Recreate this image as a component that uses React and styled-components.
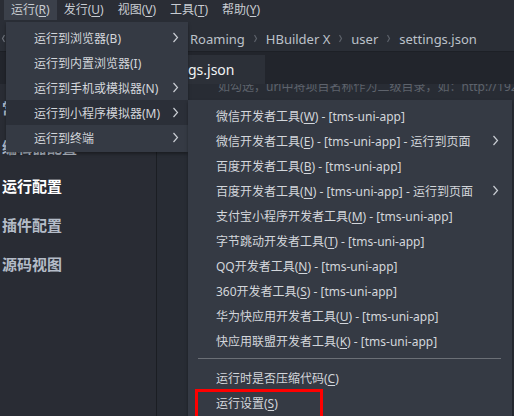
import React from "react";
import styled, { createGlobalStyle } from "styled-components";

const GlobalStyle = createGlobalStyle`
  html, body { margin: 0; padding: 0; background: #282c34; }
  body { font-family: "Noto Sans", "Noto Sans CJK SC", sans-serif; }
`;

const Page = styled.div`
  position: relative;
  width: 514px;
  height: 416px;
  overflow: hidden;
  background: #282c34;
  display: flex;
  flex-direction: column;
`;

const MenuBar = styled.div`
  display: flex;
  height: 20px;
  padding-left: 4px;
  background: #2a2d35;
`;

const MenuTitle = styled.div`
  padding: 0 7px;
  line-height: 20px;
  font-size: 12px;
  color: #c8ccd2;
  background: ${(p) => (p.$open ? "#3b404a" : "transparent")};
`;

const Key = styled.span`
  text-decoration: underline;
  text-underline-offset: 2px;
`;

const Breadcrumb = styled.div`
  display: flex;
  align-items: center;
  height: 32px;
  padding-top: 6px;
  box-sizing: border-box;
  border-bottom: 1px solid #1d2026;
  background: #2a2e36;
`;

const ScrollArrow = styled.div`
  width: 8px;
  display: flex;
  align-items: center;
  padding-left: 1px;
`;

const CrumbTrail = styled.div`
  display: flex;
  align-items: center;
  margin-left: 181px;
  font-size: 13px;
  color: #bcc1c9;
  white-space: nowrap;
`;

const CrumbSep = styled.span`
  display: flex;
  align-items: center;
  padding: 0 8px;
`;

const TabBar = styled.div`
  display: flex;
  align-items: flex-end;
  height: 32px;
  background: #22252c;
`;

const Tab = styled.div`
  margin-left: 139px;
  height: 29px;
  padding: 0 31px 0 12px;
  display: flex;
  align-items: center;
  font-size: 14px;
  color: #f2f3f5;
  background: #2c3038;
`;

const Body = styled.div`
  flex: 1;
  display: flex;
  min-height: 0;
`;

const Sidebar = styled.div`
  width: 156px;
  padding-top: 5px;
  border-right: 1px solid #1b1e23;
  background: #292c34;
`;

const NavItem = styled.div`
  height: 39px;
  line-height: 39px;
  padding-left: 2px;
  font-size: 15px;
  font-weight: 700;
  color: ${(p) => (p.$active ? "#ffffff" : "#b4bcc8")};
`;

const Content = styled.div`
  flex: 1;
  overflow: hidden;
  padding-left: 61px;
`;

const Hint = styled.div`
  margin-top: -5px;
  line-height: 16px;
  font-size: 12px;
  color: #5e636c;
  white-space: nowrap;
`;

const Dropdown = styled.div`
  position: absolute;
  top: ${(p) => p.$top}px;
  left: ${(p) => p.$left}px;
  width: ${(p) => p.$width}px;
  padding: 3px 0 2px;
  background: #353a44;
  box-shadow: 0 2px 3px rgba(0, 0, 0, 0.35);
`;

const MenuItem = styled.div`
  display: flex;
  align-items: center;
  height: 25px;
  padding: 0 ${(p) => p.$right}px 0 28px;
  font-size: 12px;
  color: #d3d6db;
  white-space: nowrap;
  background: ${(p) => (p.$hover ? "#2b2f38" : "transparent")};
`;

const Label = styled.span`
  flex: 1;
`;

const Separator = styled.div`
  height: 1px;
  margin: 5px 11px 6px 10px;
  background: #6b6f76;
`;

const Callout = styled.div`
  position: absolute;
  left: 195px;
  top: 389px;
  width: 122px;
  height: 30px;
  border: 3px solid #ff0000;
`;

const Chevron = ({ left, small, color = "#c9cdd3" }) => {
  const w = small ? 5 : 7;
  const h = small ? 9 : 11;
  const d = left
    ? `M${w - 1.5} 1 L1.5 ${h / 2} L${w - 1.5} ${h - 1}`
    : `M1.5 1 L${w - 1.5} ${h / 2} L1.5 ${h - 1}`;
  return (
    <svg width={w} height={h} viewBox={`0 0 ${w} ${h}`}>
      <path d={d} fill="none" stroke={color} strokeWidth="1.2" />
    </svg>
  );
};

const runMenu = [
  { text: "运行到浏览器(B)", sub: true },
  { text: "运行到内置浏览器(I)" },
  { text: "运行到手机或模拟器(N)", sub: true },
  { text: "运行到小程序模拟器(M)", sub: true, hover: true },
  { text: "运行到终端", sub: true },
];

const miniTools = [
  ["微信开发者工具", "W", " - [tms-uni-app]"],
  ["微信开发者工具", "E", " - [tms-uni-app] - 运行到页面", true],
  ["百度开发者工具", "B", " - [tms-uni-app]"],
  ["百度开发者工具", "N", " - [tms-uni-app] - 运行到页面", true],
  ["支付宝小程序开发者工具", "M", " - [tms-uni-app]"],
  ["字节跳动开发者工具", "T", " - [tms-uni-app]"],
  ["QQ开发者工具", "N", " - [tms-uni-app]"],
  ["360开发者工具", "S", " - [tms-uni-app]"],
  ["华为快应用开发者工具", "U", " - [tms-uni-app]"],
  ["快应用联盟开发者工具", "K", " - [tms-uni-app]"],
];

const crumbs = ["Roaming", "HBuilder X", "user", "settings.json"];

const App = () => {
  return (
    <Page>
      <GlobalStyle />
      <MenuBar>
        <MenuTitle $open>运行(<Key>R</Key>)</MenuTitle>
        <MenuTitle>发行(<Key>U</Key>)</MenuTitle>
        <MenuTitle>视图(<Key>V</Key>)</MenuTitle>
        <MenuTitle>工具(<Key>T</Key>)</MenuTitle>
        <MenuTitle>帮助(<Key>Y</Key>)</MenuTitle>
      </MenuBar>

      <Breadcrumb>
        <ScrollArrow>
          <Chevron left small color="#6d727b" />
        </ScrollArrow>
        <CrumbTrail>
          {crumbs.map((c, i) => (
            <React.Fragment key={c}>
              {i > 0 && (
                <CrumbSep>
                  <Chevron small color="#5c616a" />
                </CrumbSep>
              )}
              {c}
            </React.Fragment>
          ))}
        </CrumbTrail>
      </Breadcrumb>

      <TabBar>
        <Tab>settings.json</Tab>
      </TabBar>

      <Body>
        <Sidebar>
          <NavItem>常用配置</NavItem>
          <NavItem>编辑器配置</NavItem>
          <NavItem $active>运行配置</NavItem>
          <NavItem>插件配置</NavItem>
          <NavItem>源码视图</NavItem>
        </Sidebar>
        <Content>
          <Hint>如勾选，url中将项目名称作为二级目录，如：http://192.168</Hint>
        </Content>
      </Body>

      <Dropdown $top={22} $left={6} $width={182}>
        {runMenu.map((item) => (
          <MenuItem key={item.text} $hover={item.hover} $right={9}>
            <Label>{item.text}</Label>
            {item.sub && <Chevron />}
          </MenuItem>
        ))}
      </Dropdown>

      <Dropdown $top={100} $left={188} $width={324}>
        {miniTools.map(([name, key, rest, sub], i) => (
          <MenuItem key={i} $right={13}>
            <Label>
              {name}(<Key>{key}</Key>){rest}
            </Label>
            {sub && <Chevron />}
          </MenuItem>
        ))}
        <Separator />
        <MenuItem $right={13}>
          <Label>
            运行时是否压缩代码(<Key>C</Key>)
          </Label>
        </MenuItem>
        <MenuItem $right={13}>
          <Label>
            运行设置(<Key>S</Key>)
          </Label>
        </MenuItem>
      </Dropdown>

      <Callout />
    </Page>
  );
};

export default App;
